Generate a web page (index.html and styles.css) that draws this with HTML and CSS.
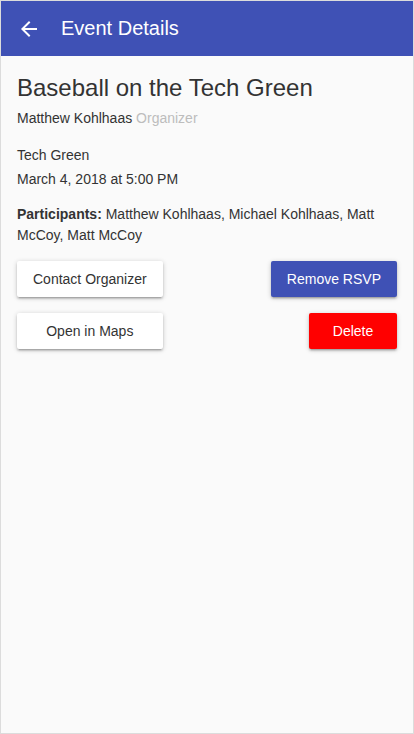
FILE: index.html
```html
<!DOCTYPE html>
<html lang="en">
<head>
<meta charset="utf-8">
<title>Event Details</title>
<link rel="stylesheet" href="styles.css">
</head>
<body>
<div class="frame">
  <header class="toolbar">
    <span class="back" aria-label="Back">
      <svg viewBox="0 0 24 24" width="24" height="24"><path fill="#fff" d="M20 11H7.83l5.59-5.59L12 4l-8 8 8 8 1.41-1.41L7.83 13H20v-2z"/></svg>
    </span>
    <span class="toolbar-title">Event Details</span>
  </header>
  <main class="content">
    <h1 class="event-title">Baseball on the Tech Green</h1>
    <p class="organizer">Matthew Kohlhaas <span class="role">Organizer</span></p>
    <div class="details">
      <p class="line">Tech Green</p>
      <p class="line">March 4, 2018 at 5:00 PM</p>
    </div>
    <p class="participants"><strong>Participants:</strong> Matthew Kohlhaas, Michael Kohlhaas, Matt McCoy, Matt McCoy</p>
    <div class="actions">
      <button class="btn btn-plain">Contact Organizer</button>
      <button class="btn btn-primary">Remove RSVP</button>
      <button class="btn btn-plain">Open in Maps</button>
      <button class="btn btn-danger">Delete</button>
    </div>
  </main>
</div>
</body>
</html>
```
FILE: styles.css
```css
* { box-sizing: border-box; }
html, body { margin: 0; padding: 0; }
body {
  font-family: "Liberation Sans", Arial, sans-serif;
  color: #333;
  background: #fafafa;
}
.frame {
  width: 414px;
  height: 734px;
  border: 1px solid #dcdcdc;
  background: #fafafa;
  display: flex;
  flex-direction: column;
}
.toolbar {
  height: 55px;
  background: #3f51b5;
  color: #fff;
  display: flex;
  align-items: center;
  padding-left: 16px;
}
.back {
  width: 24px;
  height: 24px;
  display: flex;
}
.toolbar-title {
  margin-left: 20px;
  font-size: 20px;
}
.content {
  padding: 18px 16px 0;
}
.event-title {
  margin: 0;
  font-size: 24px;
  font-weight: 400;
  line-height: 28px;
  color: #333;
}
.organizer {
  margin: 6px 0 0;
  font-size: 14px;
  line-height: 20px;
}
.role { color: #bdbdbd; }
.details { margin-top: 15px; }
.line {
  margin: 0;
  font-size: 14px;
  line-height: 24px;
}
.participants {
  margin: 13px 0 0;
  font-size: 14px;
  line-height: 21px;
}
.participants strong { font-weight: 700; }
.actions {
  margin-top: 15px;
  display: grid;
  grid-template-columns: auto 1fr;
  row-gap: 16px;
}
.btn {
  height: 36px;
  min-width: 88px;
  padding: 0 16px;
  border: none;
  border-radius: 2px;
  font-family: "Liberation Sans", Arial, sans-serif;
  font-size: 14px;
  box-shadow: 0 2px 2px rgba(0,0,0,0.14), 0 3px 1px -2px rgba(0,0,0,0.12), 0 1px 5px rgba(0,0,0,0.2);
}
.btn-plain {
  background: #fff;
  color: #333;
  justify-self: stretch;
}
.btn-primary {
  background: #3f51b5;
  color: #fff;
  justify-self: end;
}
.btn-danger {
  background: #ff0000;
  color: #fff;
  justify-self: end;
}
```
